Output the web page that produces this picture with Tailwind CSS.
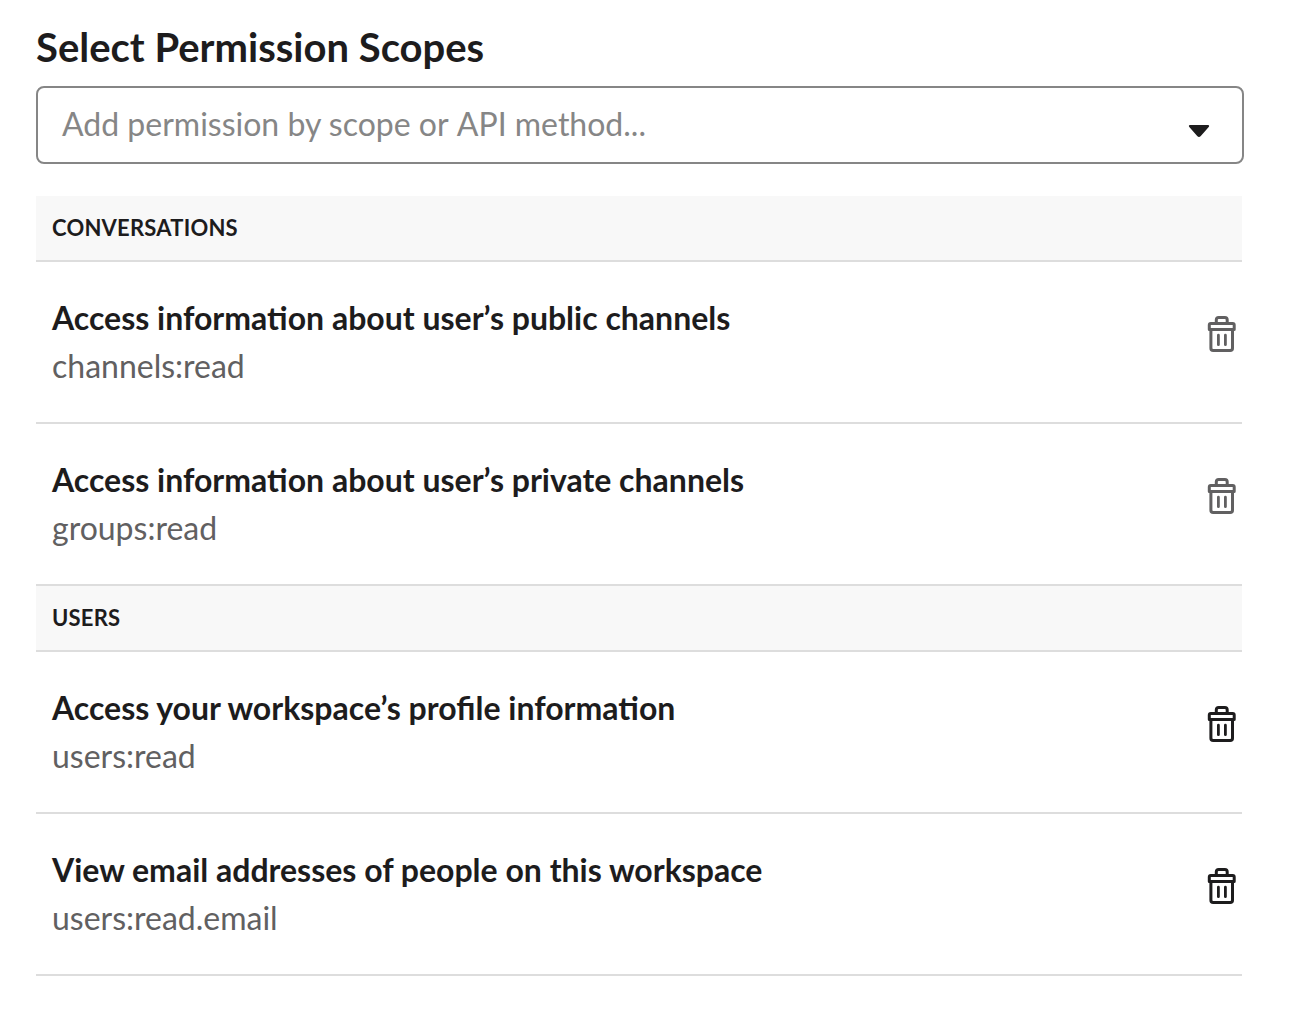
<!DOCTYPE html>
<html lang="en">
<head>
<meta charset="utf-8">
<title>Permission Scopes</title>
<script src="https://cdn.jsdelivr.net/npm/@tailwindcss/browser@4"></script>
</head>
<body class="bg-white font-['Lato',sans-serif] text-[#1d1c1d] antialiased">
<svg class="hidden"><symbol id="trash" viewBox="0 0 32 40"><g fill="none" stroke="currentColor" stroke-width="3" stroke-linejoin="round" stroke-linecap="round"><path d="M3.3 15.5V11Q3.3 9.5 4.8 9.5H26.7Q28.2 9.5 28.2 11V15.5Z"/><path d="M10.3 9V5.7Q10.3 3.4 12.6 3.4H18.9Q21.2 3.4 21.2 5.7V9"/><path d="M4.9 15.5V34.2Q4.9 36.5 7.2 36.5H24.2Q26.5 36.5 26.5 34.2V15.5"/><path stroke-width="2.8" d="M12.4 21.2V30.7M19.4 21.2V30.7"/></g></symbol></svg>
<main class="w-[1244px] pl-9 pt-[23px]">
  <h1 class="h-[63px] text-[40px] leading-12 font-bold whitespace-nowrap">Select Permission Scopes</h1>
  <div class="flex h-[78px] items-center justify-between rounded-lg border-2 border-[#868686] pl-6 pr-8">
    <span class="-mt-0.5 text-[32px] leading-10 text-[#868686]">Add permission by scope or<span class="ml-px"> API method...</span></span>
    <svg class="mt-3 h-3.5 w-[22px]" viewBox="0 0 22 14"><path fill="#1d1c1d" d="M2 1H20Q22 1.5 20.5 3.2L12.8 12Q11 13.9 9.2 12L1.5 3.2Q0 1.5 2 1Z"/></svg>
  </div>
  <section class="mt-8 w-[1206px]">
    <h2 class="h-[66px] border-b-2 border-[#dddddd] bg-[#f8f8f8] pl-4 text-[22px] leading-16 font-bold tracking-[0.22px]">CONVERSATIONS</h2>
    <div class="flex h-[162px] justify-between border-b-2 border-[#dddddd] pl-4 pr-1 pt-8">
      <div class="text-[32px] leading-12"><h3 class="font-bold">Access information about user’s public channels</h3><p class="text-[#616061]">channels:read</p></div>
      <svg class="mt-5 h-10 w-8 text-[#616061]"><use href="#trash"/></svg>
    </div>
    <div class="flex h-[162px] justify-between border-b-2 border-[#dddddd] pl-4 pr-1 pt-8">
      <div class="text-[32px] leading-12"><h3 class="font-bold">Access information about user’s private channels</h3><p class="text-[#616061]">groups:read</p></div>
      <svg class="mt-5 h-10 w-8 text-[#616061]"><use href="#trash"/></svg>
    </div>
    <h2 class="h-[66px] border-b-2 border-[#dddddd] bg-[#f8f8f8] pl-4 text-[22px] leading-16 font-bold tracking-[0.22px]">USERS</h2>
    <div class="flex h-[162px] justify-between border-b-2 border-[#dddddd] pl-4 pr-1 pt-8">
      <div class="text-[32px] leading-12"><h3 class="font-bold">Access your workspace’s profile information</h3><p class="text-[#616061]">users:read</p></div>
      <svg class="mt-5 h-10 w-8"><use href="#trash"/></svg>
    </div>
    <div class="flex h-[162px] justify-between border-b-2 border-[#dddddd] pl-4 pr-1 pt-8">
      <div class="text-[32px] leading-12"><h3 class="font-bold">View email addresses of people on this workspace</h3><p class="text-[#616061]">users:read.email</p></div>
      <svg class="mt-5 h-10 w-8"><use href="#trash"/></svg>
    </div>
  </section>
</main>
</body>
</html>
